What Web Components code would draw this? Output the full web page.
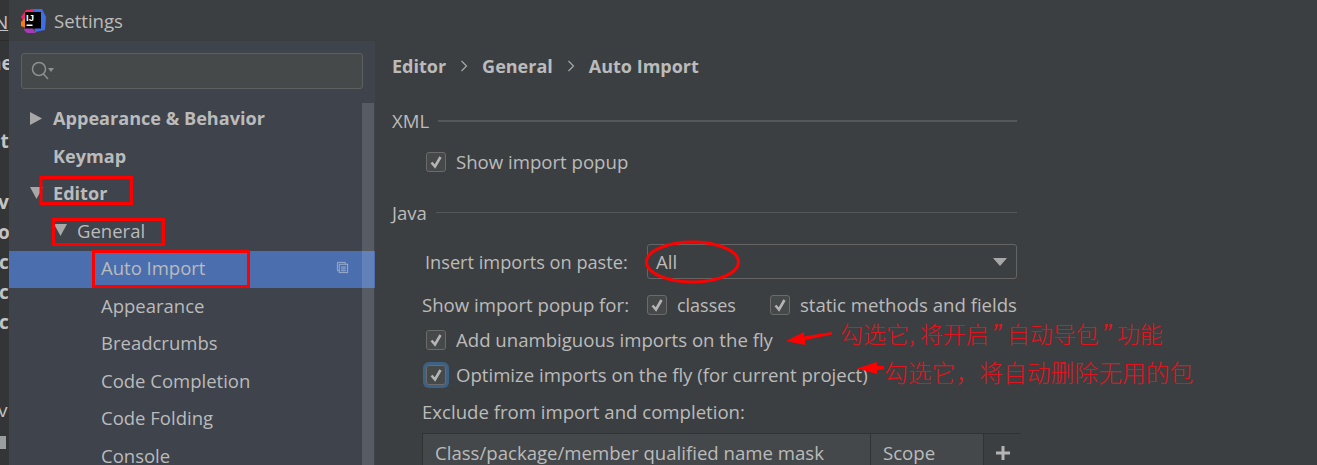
<!DOCTYPE html>
<html lang="en">
<head>
<meta charset="utf-8">
<title>Settings</title>
<style>
  html, body { margin: 0; padding: 0; background: #3c3f41; }
  body { width: 1317px; height: 465px; overflow: hidden; font-family: "Open Sans", "Noto Sans CJK SC", sans-serif; color: #bbb; }
</style>
</head>
<body>
<settings-window>
  <tree-row arrow="right" strong>Appearance &amp; Behavior</tree-row>
  <tree-row strong>Keymap</tree-row>
  <tree-row arrow="down" strong>Editor</tree-row>
  <tree-row level="1" arrow="down">General</tree-row>
  <tree-row level="2" selected>Auto Import</tree-row>
  <tree-row level="2">Appearance</tree-row>
  <tree-row level="2">Breadcrumbs</tree-row>
  <tree-row level="2">Code Completion</tree-row>
  <tree-row level="2">Code Folding</tree-row>
  <tree-row level="2">Console</tree-row>
  <auto-import-page slot="page"></auto-import-page>
</settings-window>
<red-notes></red-notes>

<script>
class SettingsWindow extends HTMLElement {
    constructor() {
        super();
        this.attachShadow({ mode: 'open' });
        this.shadowRoot.innerHTML = `
            <style>
                :host { display: flex; width: 1317px; height: 465px; overflow: hidden; }
                .strip { width: 9px; flex: none; background: #333537; overflow: hidden; font-size: 19px; font-weight: 700; line-height: 26px; color: #c4c4c4; white-space: nowrap; }
                .strip div { height: 26px; }
                .strip .rule { height: 1px; background: #2b2b2b; }
                .main { flex: 1; display: flex; flex-direction: column; min-width: 0; }
                .title { height: 41px; flex: none; display: flex; align-items: center; padding-left: 11px; gap: 8px; font-size: 18.6px; color: #bbb; }
                .body { flex: 1; display: flex; min-height: 0; }
                .side { width: 366px; flex: none; background: #3e434c; position: relative; overflow: hidden; }
                .search { margin: 12px 0 0 12px; width: 342px; height: 36px; box-sizing: border-box; border: 1px solid #5e6060; border-radius: 3px; background: #45494a; display: flex; align-items: center; padding-left: 8px; }
                .tree { margin-top: 11.5px; }
                .bar { position: absolute; top: 62px; bottom: 0; left: 353px; width: 12px; background: rgba(255,255,255,.13); }
                .page { flex: 1; min-width: 0; }
            </style>
            <div class="strip">
                <div style="margin-top:9px;margin-left:-6px;font-weight:400;text-decoration:underline">N</div>
                <div class="rule" style="margin-top:5px"></div>
                <div style="margin-top:9px;margin-left:-11px">ne</div>
                <div style="margin-top:52px;margin-left:-12px">nt</div>
                <div style="margin-top:35px;margin-left:-2px">v</div>
                <div style="margin-top:4px;margin-left:-2px">or</div>
                <div style="margin-top:4px;margin-left:-1px">c</div>
                <div style="margin-top:4px;margin-left:-1px">c</div>
                <div style="margin-top:4px;margin-left:-1px">c</div>
                <div style="margin-top:62px;margin-left:-2px;font-weight:400">v</div>
                <div style="margin-top:13px;width:6px;height:13px;background:#9a9e9f"></div>
            </div>
            <div class="main">
                <div class="title">
                    <svg width="26" height="26" viewBox="0 0 26 26">
                        <polygon points="1,9 6,2 14,1 13,14 4,14" fill="#f0266f"/>
                        <polygon points="14,1 22,1 26,9 25,22 15,24" fill="#3d6ee8"/>
                        <polygon points="1,14 5,10 9,16 6,20 1,18" fill="#f97a12"/>
                        <polygon points="4,22 8,14 16,25 7,25" fill="#a63bb8"/>
                        <rect x="5" y="4" width="16" height="16.5" fill="#000"/>
                        <text x="6" y="13" font-family="Liberation Sans" font-size="9.5" font-weight="700" fill="#fff">IJ</text>
                        <rect x="6.5" y="16.5" width="6" height="1.5" fill="#fff"/>
                    </svg>
                    <span>Settings</span>
                </div>
                <div class="body">
                    <div class="side">
                        <div class="search">
                            <svg width="26" height="22" viewBox="0 0 26 22" fill="none" stroke="#8c9092" stroke-width="1.5">
                                <circle cx="9" cy="9" r="6.5"/>
                                <path d="M13.5 14 L18 19"/>
                                <polygon points="18,8 24,8 21,12" fill="#8c9092" stroke="none"/>
                            </svg>
                        </div>
                        <div class="tree"><slot></slot></div>
                        <div class="bar"></div>
                    </div>
                    <div class="page"><slot name="page"></slot></div>
                </div>
            </div>
        `;
    }
}

class TreeRow extends HTMLElement {
    constructor() {
        super();
        this.attachShadow({ mode: 'open' });
    }

    connectedCallback() {
        const level = parseInt(this.getAttribute('level') || '0', 10);
        const arrow = this.getAttribute('arrow');
        const left = 44 + level * 24;
        let glyph = '';
        if (arrow === 'right') glyph = '<polygon points="0,0 12,6.5 0,13" fill="#a8a8a8"/>';
        if (arrow === 'down') glyph = '<polygon points="0,0 13,0 6.5,12" fill="#a8a8a8"/>';
        this.shadowRoot.innerHTML = `
            <style>
                :host { display: flex; align-items: center; box-sizing: border-box; height: 37.5px; padding: 0 0 2px ${left}px; position: relative; font-size: 18.5px; line-height: 26px; white-space: nowrap; color: #bbb; }
                :host([strong]) { font-weight: 700; font-size: 18.1px; }
                :host([selected]) { background: #4b6eaf; }
                .tw { position: absolute; left: ${left - 23}px; top: 11px; }
                .copy { position: absolute; left: 327px; top: 10px; }
            </style>
            ${glyph ? `<svg class="tw" width="14" height="14" viewBox="0 0 14 14">${glyph}</svg>` : ''}
            <slot></slot>
            ${this.hasAttribute('selected') ? `<svg class="copy" width="13" height="13" viewBox="0 0 14 14" fill="none" stroke="#9fb0cf" stroke-width="1"><path d="M3.5 10.5 H1.5 V1.5 H10 V3.5"/><rect x="3.5" y="3.5" width="9" height="9"/><path d="M5.5 6.5 H10.5 M5.5 8.5 H10.5 M5.5 10.5 H10.5"/></svg>` : ''}
        `;
    }
}

class CheckBox extends HTMLElement {
    constructor() {
        super();
        this.attachShadow({ mode: 'open' });
        this.shadowRoot.innerHTML = `
            <style>
                :host { display: inline-flex; align-items: center; gap: 10px; white-space: nowrap; }
                .box { width: 20px; height: 20px; box-sizing: border-box; flex: none; border: 1px solid #6b6b6b; border-radius: 3px; background: #45494a; display: flex; align-items: center; justify-content: center; }
                :host([focused]) .box { box-shadow: 0 0 0 3px #3d6185; }
                path { fill: none; stroke: #b4b4b4; stroke-width: 2.6; }
            </style>
            <span class="box"><svg width="14" height="14" viewBox="0 0 14 14"><path d="M2.5 7.5 L6 11.5 L11.5 2"/></svg></span>
            <span><slot></slot></span>
        `;
    }
}

class GroupTitle extends HTMLElement {
    constructor() {
        super();
        this.attachShadow({ mode: 'open' });
        this.shadowRoot.innerHTML = `
            <style>
                :host { display: flex; align-items: center; gap: 9px; height: 34px; }
                i { flex: 1; height: var(--rule-h, 1px); margin-bottom: var(--rule-up, 0); background: #55585a; }
            </style>
            <slot></slot><i></i>
        `;
    }
}

class IdeCombo extends HTMLElement {
    constructor() {
        super();
        this.attachShadow({ mode: 'open' });
        this.shadowRoot.innerHTML = `
            <style>
                :host { display: flex; align-items: center; justify-content: space-between; box-sizing: border-box; height: 35px; border: 1px solid #646464; border-radius: 3px; background: #3c3f41; padding: 0 9px 0 8px; }
            </style>
            <slot></slot>
            <svg width="14" height="8" viewBox="0 0 14 8"><polygon points="0,0 14,0 7,8" fill="#a8a8a8"/></svg>
        `;
    }
}

class ExcludeTable extends HTMLElement {
    constructor() {
        super();
        this.attachShadow({ mode: 'open' });
        this.shadowRoot.innerHTML = `
            <style>
                :host { display: grid; grid-template-columns: 447px 112px 38px; column-gap: 1px; width: 599px; box-sizing: border-box; margin-left: 30px; border: 1px solid #323232; border-bottom: 0; background: #323232; height: 40px; }
                div { background: #45484a; display: flex; align-items: center; padding-left: 12px; height: 38px; }
                .add { padding: 0; justify-content: center; background: #3c3f41; }
                path { stroke: #b4b4b4; stroke-width: 3; }
            </style>
            <div>Class/package/member qualified name mask</div>
            <div>Scope</div>
            <div class="add"><svg width="16" height="16" viewBox="0 0 16 16"><path d="M8 1 V15 M1 8 H15"/></svg></div>
        `;
    }
}

class AutoImportPage extends HTMLElement {
    constructor() {
        super();
        this.attachShadow({ mode: 'open' });
        this.shadowRoot.innerHTML = `
            <style>
                :host { display: flex; flex-direction: column; padding-left: 17px; width: 625px; font-size: 18.6px; line-height: 24px; color: #bbb; white-space: nowrap; }
                .crumbs { display: flex; align-items: center; gap: 14px; height: 34px; margin-top: 8px; font-size: 18px; font-weight: 700; }
                .row { display: flex; align-items: center; height: 32px; }
                .in { padding-left: 34px; }
            </style>
            <div class="crumbs">
                <span>Editor</span>
                <svg width="8" height="12" viewBox="0 0 8 12" fill="none" stroke="#a8a8a8" stroke-width="1.2"><path d="M1.5 1 L6.5 6 L1.5 11"/></svg>
                <span>General</span>
                <svg width="8" height="12" viewBox="0 0 8 12" fill="none" stroke="#a8a8a8" stroke-width="1.2"><path d="M1.5 1 L6.5 6 L1.5 11"/></svg>
                <span>Auto Import</span>
            </div>
            <group-title style="margin-top:21px;--rule-h:2px">XML</group-title>
            <div class="row in" style="margin-top:8px"><check-box>Show import popup</check-box></div>
            <group-title style="margin-top:18px;--rule-up:2px">Java</group-title>
            <div class="row" style="margin-top:14px;height:35px;padding-left:33px">
                <span style="width:222px;font-size:18.2px;flex:none">Insert imports on paste:</span>
                <ide-combo style="flex:1">All</ide-combo>
            </div>
            <div class="row" style="margin-top:9px;height:34px;padding-left:30px">
                <span style="width:225px">Show import popup for:</span>
                <check-box style="font-size:18px">classes</check-box>
                <check-box style="margin-left:34px">static methods and fields</check-box>
            </div>
            <div class="row in" style="margin-top:2px"><check-box>Add unambiguous imports on the fly</check-box></div>
            <div class="row in" style="margin-top:3px"><check-box focused>Optimize imports on the fly (for current project)</check-box></div>
            <div class="row" style="margin-top:5px;padding-left:30px">Exclude from import and completion:</div>
            <exclude-table style="margin-top:5px"></exclude-table>
        `;
    }
}

// the red hand-drawn marks sit over the screenshot, so they are placed absolutely
class RedNotes extends HTMLElement {
    constructor() {
        super();
        this.attachShadow({ mode: 'open' });
        this.shadowRoot.innerHTML = `
            <style>
                :host { position: absolute; left: 0; top: 0; width: 1317px; height: 465px; pointer-events: none; }
                svg { position: absolute; left: 0; top: 0; }
                span { position: absolute; color: #e0141c; font-family: "Noto Sans CJK SC", sans-serif; font-weight: 300; font-size: 23px; line-height: 30px; white-space: nowrap; }
                b { font-family: "Liberation Sans", sans-serif; font-weight: 400; font-style: italic; font-size: 27px; line-height: 0; margin: 0 6px 0 3px; }
            </style>
            <svg width="1317" height="465" fill="none" stroke="#f00" stroke-width="3">
                <rect x="41" y="177.5" width="90.5" height="26"/>
                <rect x="53.5" y="219.5" width="110" height="25"/>
                <rect x="93.5" y="251.5" width="155" height="35"/>
                <ellipse cx="692.5" cy="262" rx="46" ry="20"/>
                <polygon points="786,341 804,332 804,336.5 832,332 832,334.5 805,340 805,345" fill="#f00" stroke="none"/>
                <polygon points="857,368.5 877,362 877,366 884,366 884,369 877,370 877,374" fill="#f00" stroke="none"/>
            </svg>
            <span style="left:840px;top:318px">勾选它, 将开启<b>”</b>自动导包<b>”</b>功能</span>
            <span style="left:884px;top:357px;font-size:23.8px">勾选它，将自动删除无用的包</span>
        `;
    }
}

customElements.define('settings-window', SettingsWindow);
customElements.define('tree-row', TreeRow);
customElements.define('check-box', CheckBox);
customElements.define('group-title', GroupTitle);
customElements.define('ide-combo', IdeCombo);
customElements.define('exclude-table', ExcludeTable);
customElements.define('auto-import-page', AutoImportPage);
customElements.define('red-notes', RedNotes);
</script>
</body>
</html>
